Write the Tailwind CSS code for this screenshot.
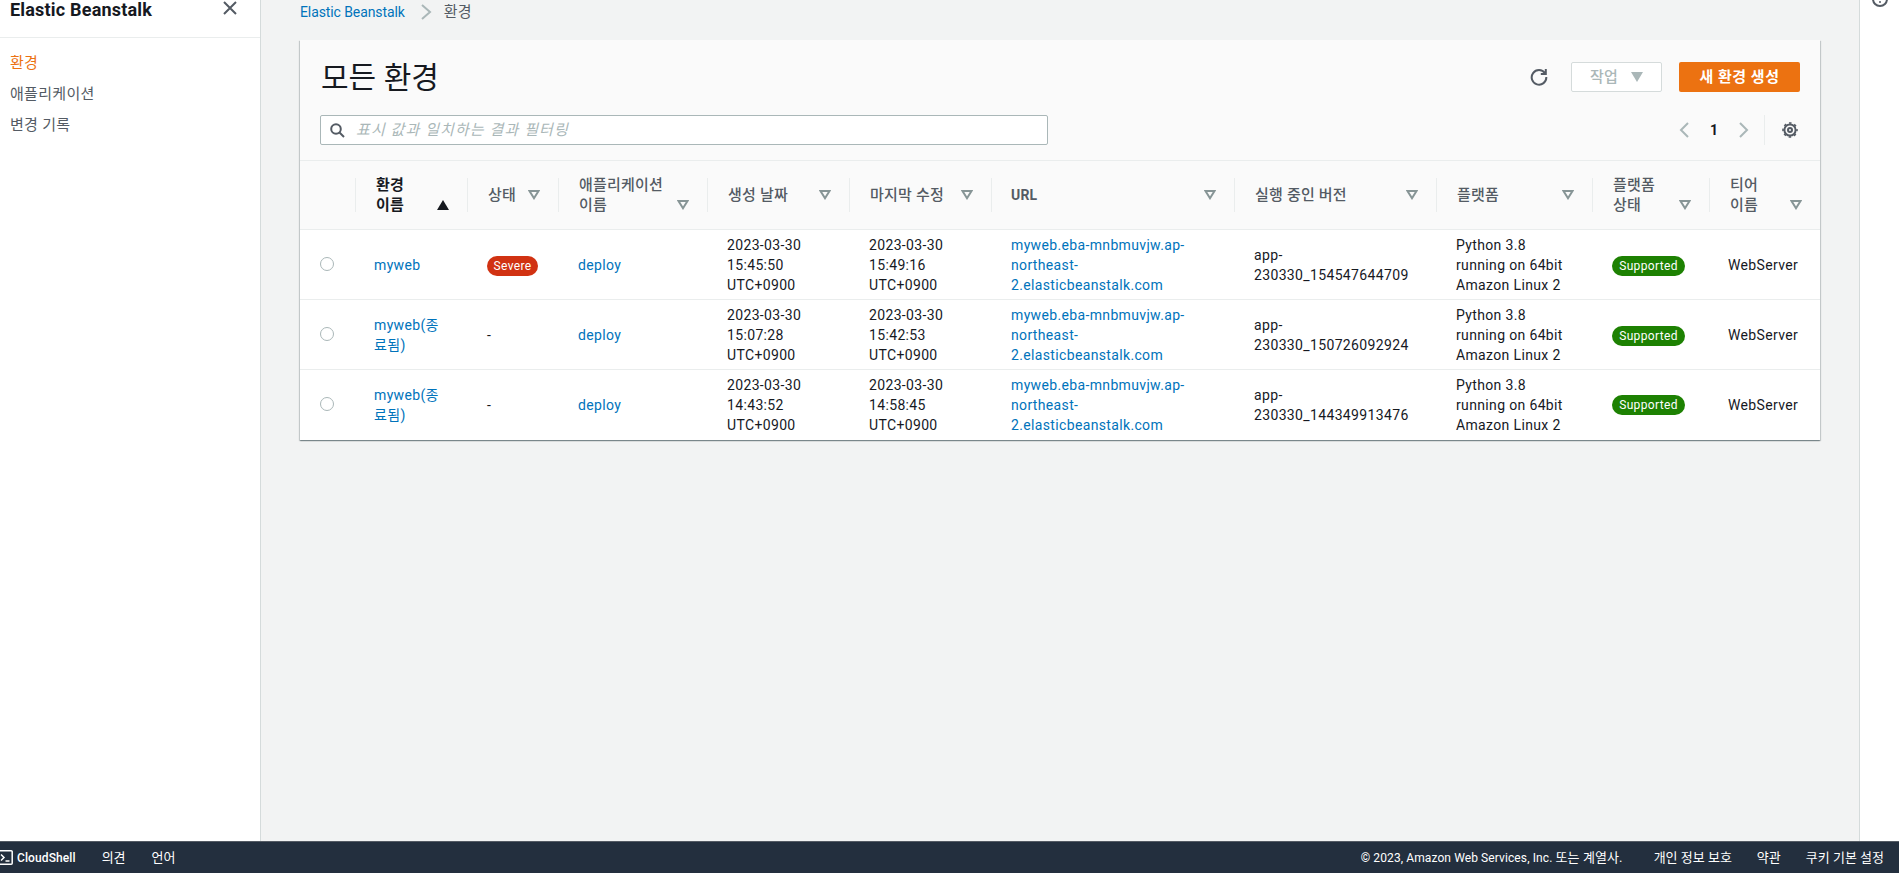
<!DOCTYPE html>
<html lang="ko">
<head>
  <meta charset="UTF-8" />
  <title>Elastic Beanstalk - 환경</title>
  <script src="https://cdn.jsdelivr.net/npm/@tailwindcss/browser@4"></script>
</head>
<body class="h-screen overflow-hidden flex flex-col bg-[#f2f3f3] text-[14px] leading-[20px] text-[#16191f] [font-family:Roboto,'Noto_Sans_CJK_KR',sans-serif]">

  <div class="flex-1 min-h-0 flex">

    <!-- Sidebar -->
    <aside class="w-[261px] shrink-0 bg-white border-r border-[#d5dbdb]">
      <div class="h-[38px] border-b border-[#eaeded] pl-[10px] pr-[23px] flex justify-between items-start">
        <h2 class="text-[18px] leading-[20px] tracking-[0.2px] font-bold">Elastic Beanstalk</h2>
        <svg class="w-[14px] h-[14px] mt-px" viewBox="0 0 14 14" fill="none" stroke="#545b64" stroke-width="2"><path d="M1 1l12 12M13 1L1 13"/></svg>
      </div>
      <nav class="pl-[10px] pt-[15px] flex flex-col gap-[11px] text-[15px] tracking-[0.3px] text-[#545b64]">
        <a href="#" class="text-[#ec7211]">환경</a>
        <a href="#">애플리케이션</a>
        <a href="#">변경 기록</a>
      </nav>
    </aside>

    <!-- Main -->
    <main class="flex-1 min-w-0 pl-[39px]">
      <nav class="h-[40px] pb-[16px] flex items-center text-[#545b64]">
        <a href="#" class="text-[#0073bb] tracking-[-0.1px]">Elastic Beanstalk</a>
        <svg class="w-[12px] h-[16px] ml-[15px] mr-[12px]" viewBox="0 0 12 16" fill="none" stroke="#aab7b8" stroke-width="2"><path d="M2 1l8 7-8 7"/></svg>
        <span class="text-[15px] tracking-[0.3px]">환경</span>
      </nav>

      <section class="w-[1520px] bg-white shadow-[0_1px_1px_0_rgba(0,28,36,0.3),1px_1px_1px_0_rgba(0,28,36,0.15),-1px_1px_1px_0_rgba(0,28,36,0.15)]">
        <!-- Card header -->
        <div class="h-[121px] bg-[#fafafa] border-b border-[#eaeded] px-[20px] pt-[22px]">
          <div class="h-[30px] flex items-center">
            <h1 class="flex-1 pl-px mt-[2px] text-[30px] leading-[36px] font-normal">모든 환경</h1>
            <svg class="w-[18px] h-[18px] mr-[23px]" viewBox="0 0 18 18" fill="none" stroke="#545b64" stroke-width="2"><path d="M15 5.2A7.3 7.3 0 1 0 16.3 9"/><path d="M15.8 1v5h-5"/></svg>
            <button class="w-[91px] h-[30px] bg-white border border-[#d5dbdb] rounded-[2px] flex items-center justify-center gap-[13px] font-medium text-[15px] tracking-[0.3px] text-[#aab7b8]">
              작업
              <svg class="w-[12px] h-[10px]" viewBox="0 0 12 10"><path d="M0 0h12L6 10z" fill="#aab7b8"/></svg>
            </button>
            <button class="w-[121px] h-[30px] ml-[17px] bg-[#ec7211] rounded-[2px] font-bold text-[15px] tracking-[0.5px] text-white">새 환경 생성</button>
          </div>
          <div class="h-[30px] mt-[23px] flex items-center justify-between">
            <div class="relative w-[728px]">
              <svg class="absolute left-[10px] top-[8px] w-[15px] h-[15px]" viewBox="0 0 15 15" fill="none" stroke="#545b64" stroke-width="2"><circle cx="6" cy="6" r="4.8"/><path d="M9.5 9.5L14 14"/></svg>
              <input type="text" placeholder="표시 값과 일치하는 결과 필터링" class="w-full h-[30px] pl-[35px] bg-white border border-[#aab7b8] rounded-[2px] text-[15px] tracking-[1.1px] placeholder:italic placeholder:text-[#aab7b8]" />
            </div>
            <div class="flex items-center mr-[2px]">
              <button class="w-[30px] flex justify-center"><svg class="w-[10px] h-[16px]" viewBox="0 0 10 16" fill="none" stroke="#aab7b8" stroke-width="2"><path d="M9 1L2 8l7 7"/></svg></button>
              <span class="w-[30px] text-center font-bold">1</span>
              <button class="w-[30px] flex justify-center"><svg class="w-[10px] h-[16px]" viewBox="0 0 10 16" fill="none" stroke="#aab7b8" stroke-width="2"><path d="M1 1l7 7-7 7"/></svg></button>
              <div class="w-px h-[30px] ml-[5px] bg-[#eaeded]"></div>
              <svg class="w-[16px] h-[16px] ml-[17px]" viewBox="0 0 16 16" fill="none" stroke="#545b64" stroke-width="2"><circle cx="8" cy="8" r="2"/><circle cx="8" cy="8" r="5.6"/><circle cx="8" cy="8" r="7" stroke-dasharray="2.5 3" stroke-dashoffset="1.25" stroke-width="1.6"/></svg>
            </div>
          </div>
        </div>

        <!-- Environments table -->
        <table class="w-full table-fixed">
          <thead class="bg-[#fafafa] text-left text-[15px] tracking-[0.2px]">
            <tr class="h-[68px] border-b border-[#eaeded]">
              <th class="w-[55px] font-bold"></th>
              <th class="w-[112px] font-bold">
                <div class="h-[34px] pl-[20px] pr-[18px] border-l border-[#eaeded] flex items-center"><div class="flex-1 flex items-end justify-between">
                  <span>환경<br>이름</span>
                  <span class="h-[20px] flex items-center"><svg class="w-[12px] h-[10px]" viewBox="0 0 12 10"><path d="M6 0l6 10H0z" fill="#16191f"/></svg></span>
                </div></div>
              </th>
              <th class="w-[91px] font-medium text-[#545b64]">
                <div class="h-[34px] pl-[20px] pr-[18px] border-l border-[#eaeded] flex items-center"><div class="flex-1 flex items-end justify-between">
                  <span>상태</span>
                  <span class="h-[20px] flex items-center"><svg class="w-[12px] h-[10px]" viewBox="0 0 12 10" fill="none" stroke="#879596" stroke-width="2"><path d="M1.5 1h9L6 8.2z"/></svg></span>
                </div></div>
              </th>
              <th class="w-[149px] font-medium text-[#545b64]">
                <div class="h-[34px] pl-[20px] pr-[18px] border-l border-[#eaeded] flex items-center"><div class="flex-1 flex items-end justify-between">
                  <span>애플리케이션<br>이름</span>
                  <span class="h-[20px] flex items-center"><svg class="w-[12px] h-[10px]" viewBox="0 0 12 10" fill="none" stroke="#879596" stroke-width="2"><path d="M1.5 1h9L6 8.2z"/></svg></span>
                </div></div>
              </th>
              <th class="w-[142px] font-medium text-[#545b64]">
                <div class="h-[34px] pl-[20px] pr-[18px] border-l border-[#eaeded] flex items-center"><div class="flex-1 flex items-end justify-between">
                  <span>생성 날짜</span>
                  <span class="h-[20px] flex items-center"><svg class="w-[12px] h-[10px]" viewBox="0 0 12 10" fill="none" stroke="#879596" stroke-width="2"><path d="M1.5 1h9L6 8.2z"/></svg></span>
                </div></div>
              </th>
              <th class="w-[142px] font-medium text-[#545b64]">
                <div class="h-[34px] pl-[20px] pr-[18px] border-l border-[#eaeded] flex items-center"><div class="flex-1 flex items-end justify-between">
                  <span>마지막 수정</span>
                  <span class="h-[20px] flex items-center"><svg class="w-[12px] h-[10px]" viewBox="0 0 12 10" fill="none" stroke="#879596" stroke-width="2"><path d="M1.5 1h9L6 8.2z"/></svg></span>
                </div></div>
              </th>
              <th class="w-[243px] font-bold text-[#545b64]">
                <div class="h-[34px] pl-[19px] pr-[18px] border-l border-[#eaeded] flex items-center"><div class="flex-1 flex items-end justify-between">
                  <span class="text-[14px]">URL</span>
                  <span class="h-[20px] flex items-center"><svg class="w-[12px] h-[10px]" viewBox="0 0 12 10" fill="none" stroke="#879596" stroke-width="2"><path d="M1.5 1h9L6 8.2z"/></svg></span>
                </div></div>
              </th>
              <th class="w-[202px] font-medium text-[#545b64]">
                <div class="h-[34px] pl-[20px] pr-[18px] border-l border-[#eaeded] flex items-center"><div class="flex-1 flex items-end justify-between">
                  <span>실행 중인 버전</span>
                  <span class="h-[20px] flex items-center"><svg class="w-[12px] h-[10px]" viewBox="0 0 12 10" fill="none" stroke="#879596" stroke-width="2"><path d="M1.5 1h9L6 8.2z"/></svg></span>
                </div></div>
              </th>
              <th class="w-[156px] font-medium text-[#545b64]">
                <div class="h-[34px] pl-[20px] pr-[18px] border-l border-[#eaeded] flex items-center"><div class="flex-1 flex items-end justify-between">
                  <span>플랫폼</span>
                  <span class="h-[20px] flex items-center"><svg class="w-[12px] h-[10px]" viewBox="0 0 12 10" fill="none" stroke="#879596" stroke-width="2"><path d="M1.5 1h9L6 8.2z"/></svg></span>
                </div></div>
              </th>
              <th class="w-[117px] font-medium text-[#545b64]">
                <div class="h-[34px] pl-[20px] pr-[18px] border-l border-[#eaeded] flex items-center"><div class="flex-1 flex items-end justify-between">
                  <span>플랫폼<br>상태</span>
                  <span class="h-[20px] flex items-center"><svg class="w-[12px] h-[10px]" viewBox="0 0 12 10" fill="none" stroke="#879596" stroke-width="2"><path d="M1.5 1h9L6 8.2z"/></svg></span>
                </div></div>
              </th>
              <th class="w-[111px] font-medium text-[#545b64]">
                <div class="h-[34px] pl-[20px] pr-[18px] border-l border-[#eaeded] flex items-center"><div class="flex-1 flex items-end justify-between">
                  <span>티어<br>이름</span>
                  <span class="h-[20px] flex items-center"><svg class="w-[12px] h-[10px]" viewBox="0 0 12 10" fill="none" stroke="#879596" stroke-width="2"><path d="M1.5 1h9L6 8.2z"/></svg></span>
                </div></div>
              </th>
            </tr>
          </thead>
          <tbody class="tracking-[0.35px]">
            <tr class="h-[70px] border-b border-[#eaeded]">
              <td><div class="w-[14px] h-[14px] ml-[20px] rounded-full bg-white border border-[#aab7b8]"></div></td>
              <td class="px-[19px] pt-[2px]"><a href="#" class="text-[#0073bb]">myweb</a></td>
              <td class="px-[20px] pt-[3px]"><span class="block w-[51px] h-[20px] rounded-full bg-[#d13212] text-white text-[12px] text-center">Severe</span></td>
              <td class="px-[20px] pt-[2px]"><a href="#" class="text-[#0073bb]">deploy</a></td>
              <td class="px-[20px] pt-[2px]">2023-03-30<br>15:45:50<br>UTC+0900</td>
              <td class="px-[20px] pt-[2px]">2023-03-30<br>15:49:16<br>UTC+0900</td>
              <td class="px-[20px] pt-[2px]"><a href="#" class="text-[#0073bb]">myweb.eba-mnbmuvjw.ap-<br>northeast-<br>2.elasticbeanstalk.com</a></td>
              <td class="px-[20px] pt-[2px]">app-<br>230330_154547644709</td>
              <td class="px-[20px] pt-[2px]">Python 3.8<br>running on 64bit<br>Amazon Linux 2</td>
              <td class="px-[20px] pt-[3px]"><span class="block w-[73px] h-[20px] rounded-full bg-[#1d8102] text-white text-[12px] text-center">Supported</span></td>
              <td class="px-[19px] pt-[2px]">WebServer</td>
            </tr>
            <tr class="h-[70px] border-b border-[#eaeded]">
              <td><div class="w-[14px] h-[14px] ml-[20px] rounded-full bg-white border border-[#aab7b8]"></div></td>
              <td class="px-[19px] pt-[2px]"><a href="#" class="text-[#0073bb]">myweb(종<br>료됨)</a></td>
              <td class="px-[20px] pt-[2px]">-</td>
              <td class="px-[20px] pt-[2px]"><a href="#" class="text-[#0073bb]">deploy</a></td>
              <td class="px-[20px] pt-[2px]">2023-03-30<br>15:07:28<br>UTC+0900</td>
              <td class="px-[20px] pt-[2px]">2023-03-30<br>15:42:53<br>UTC+0900</td>
              <td class="px-[20px] pt-[2px]"><a href="#" class="text-[#0073bb]">myweb.eba-mnbmuvjw.ap-<br>northeast-<br>2.elasticbeanstalk.com</a></td>
              <td class="px-[20px] pt-[2px]">app-<br>230330_150726092924</td>
              <td class="px-[20px] pt-[2px]">Python 3.8<br>running on 64bit<br>Amazon Linux 2</td>
              <td class="px-[20px] pt-[3px]"><span class="block w-[73px] h-[20px] rounded-full bg-[#1d8102] text-white text-[12px] text-center">Supported</span></td>
              <td class="px-[19px] pt-[2px]">WebServer</td>
            </tr>
            <tr class="h-[71px]">
              <td class="pb-[1px]"><div class="w-[14px] h-[14px] ml-[20px] rounded-full bg-white border border-[#aab7b8]"></div></td>
              <td class="px-[19px] pb-[0px]"><a href="#" class="text-[#0073bb]">myweb(종<br>료됨)</a></td>
              <td class="px-[20px]">-</td>
              <td class="px-[20px]"><a href="#" class="text-[#0073bb]">deploy</a></td>
              <td class="px-[20px]">2023-03-30<br>14:43:52<br>UTC+0900</td>
              <td class="px-[20px]">2023-03-30<br>14:58:45<br>UTC+0900</td>
              <td class="px-[20px]"><a href="#" class="text-[#0073bb]">myweb.eba-mnbmuvjw.ap-<br>northeast-<br>2.elasticbeanstalk.com</a></td>
              <td class="px-[20px]">app-<br>230330_144349913476</td>
              <td class="px-[20px]">Python 3.8<br>running on 64bit<br>Amazon Linux 2</td>
              <td class="px-[20px] pt-[1px]"><span class="block w-[73px] h-[20px] rounded-full bg-[#1d8102] text-white text-[12px] text-center">Supported</span></td>
              <td class="px-[19px]">WebServer</td>
            </tr>
          </tbody>
        </table>
      </section>
    </main>

    <!-- Right tools panel, scrolled so its icon is cut off at the top -->
    <aside class="w-[40px] shrink-0 bg-white border-l border-[#d5dbdb] overflow-hidden">
      <svg class="w-[16px] h-[16px] ml-[12px] -mt-[9px]" viewBox="0 0 16 16" fill="none" stroke="#545b64" stroke-width="2"><circle cx="8" cy="8" r="7"/><circle cx="8" cy="11" r="1" fill="#545b64" stroke="none"/></svg>
    </aside>
  </div>

  <!-- Console footer -->
  <footer class="h-[32px] shrink-0 bg-[#232f3e] border-t border-[#545b64] flex items-center text-[13px] text-white pr-[15px]">
    <svg class="w-[13px] h-[15px] mr-[4px]" viewBox="0 0 13 15" fill="none" stroke="#fff" stroke-width="1.5"><path d="M0 .8h11.2a1 1 0 0 1 1 1v11.4a1 1 0 0 1-1 1H0"/><path d="M1 4.5l3 3-3 3M5.5 11h4"/></svg>
    <span class="font-medium text-[12px] tracking-[0.1px]">CloudShell</span>
    <span class="ml-[26px]">의견</span>
    <span class="ml-[26px]">언어</span>
    <span class="ml-auto text-[12px] tracking-[0.1px]">© 2023, Amazon Web Services, Inc. <span class="text-[13px]">또는 계열사.</span></span>
    <span class="ml-[31px]">개인 정보 보호</span>
    <span class="ml-[25px]">약관</span>
    <span class="ml-[25px]">쿠키 기본 설정</span>
  </footer>

</body>
</html>
